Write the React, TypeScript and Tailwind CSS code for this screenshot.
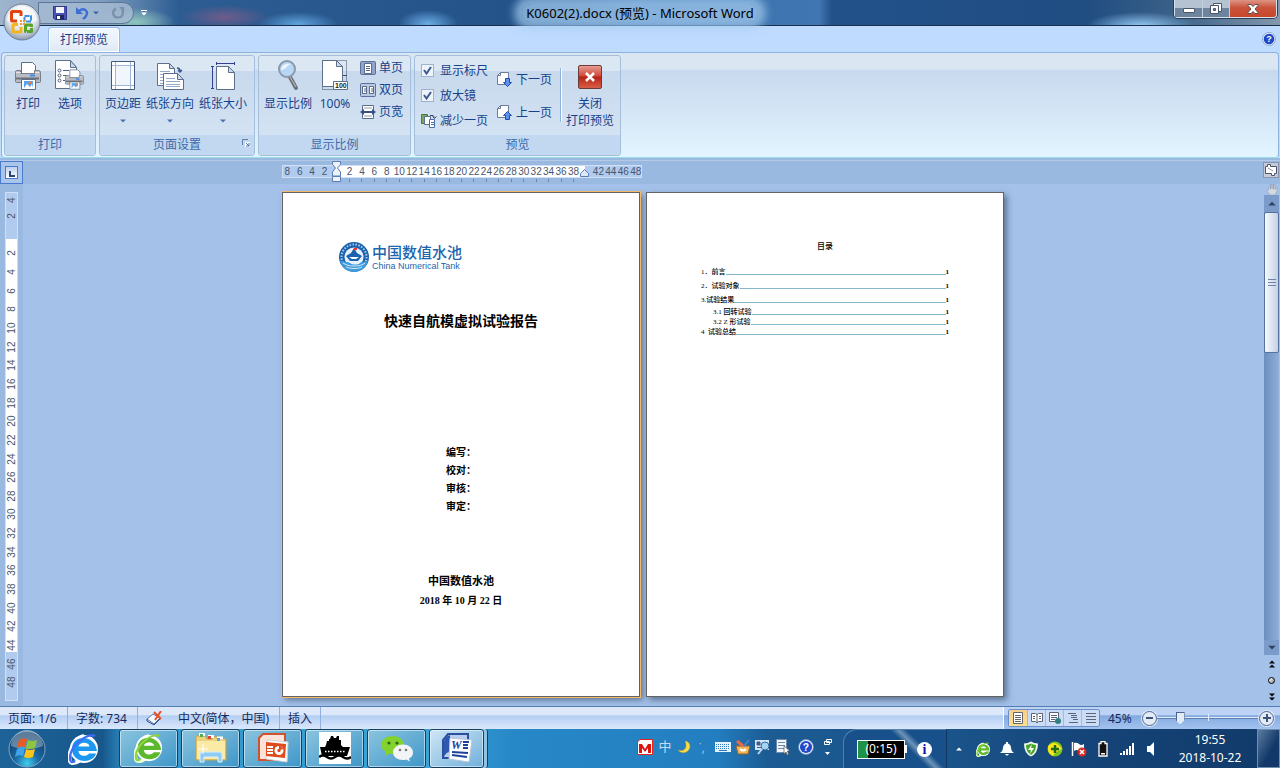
import type { ReactNode } from "react";

type IconProps = { className?: string };

const hNumbers = ["8", "6", "4", "2", "", ...Array.from({ length: 19 }, (_, i) => String(i * 2 + 2)), "", "42", "44", "46", "48"];
const vNumbers = ["4", "2", "", ...Array.from({ length: 24 }, (_, i) => String(i * 2 + 2))];

const toc = [
    { title: "1．前言", height: "h-[14px]", indent: "" },
    { title: "2．试验对象", height: "h-[14px]", indent: "" },
    { title: "3.试验结果", height: "h-[14px]", indent: "" },
    { title: "3.1 回转试验", height: "h-[10px]", indent: "pl-3" },
    { title: "3.2 Z 形试验", height: "h-[10px]", indent: "pl-3" },
    { title: "4  试验总结", height: "h-[11px]", indent: "" },
];

function OfficeLogo() {
    return (
        <svg viewBox="0 0 38 38" className="size-[38px]">
            <defs>
                <radialGradient id="orb" cx="50%" cy="35%" r="65%">
                    <stop offset="0" stopColor="#ffffff" />
                    <stop offset="0.6" stopColor="#dfe4ec" />
                    <stop offset="1" stopColor="#8d9bb0" />
                </radialGradient>
            </defs>
            <circle cx="19" cy="19" r="18" fill="url(#orb)" stroke="#6c7d96" />
            <path d="M4 18a15 15 0 0 1 30 0c-8 3-22 3-30 0z" fill="#fff" opacity="0.6" />
            <g fill="none" strokeLinejoin="round">
                <path d="M14 18H9.500q-1 0-1-1V9.500q0-1 1-1H17q1 0 1 1V13" stroke="#e2430f" strokeWidth="3" />
                <path d="M21.500 13h6.500v5.500h-6.500z" stroke="#3b8fdc" strokeWidth="2" strokeDasharray="5 1" />
                <path d="M15 21.500h-4q-1 0-1 1V28q0 1 1 1h6q1 0 1-1v-4" stroke="#f2b51c" strokeWidth="3" />
                <path d="M22.500 22h6v6.500h-6z" stroke="#58a428" strokeWidth="3" strokeDasharray="8 1" />
            </g>
            <path d="M17 17h2v2h-2zM20 17h2v2h-2zM17 20h2v2h-2zM20 20h2v2h-2z" fill="#f39a2e" />
        </svg>
    );
}

function SaveIcon() {
    return (
        <svg viewBox="0 0 14 14" className="size-[14px]">
            <path d="M.5.5h13v13H2L.5 12z" fill="#4a52b4" stroke="#30368c" />
            <path d="M3 1h8v6H3z" fill="#f1f4ff" />
            <path d="M3 9h8v4.500H3z" fill="#20265f" />
            <path d="M4 10h3v3H4z" fill="#fff" />
        </svg>
    );
}

function UndoIcon() {
    return (
        <svg viewBox="0 0 14 14" className="size-[14px]">
            <path d="M4 5c5-4 10 0 7 5-1 2-2 2-3 3" fill="none" stroke="#3c6fd6" strokeWidth="2.400" />
            <path d="M1 1v7h7z" fill="#3c6fd6" />
        </svg>
    );
}

function RedoIcon() {
    return (
        <svg viewBox="0 0 14 14" className="size-[14px]">
            <path d="M5 2.500c-5 3-3 9 2 9s6-5 4-8" fill="none" stroke="#7c8fa9" strokeWidth="2.200" />
            <path d="M8 1h5v5z" fill="#7c8fa9" />
        </svg>
    );
}

function Caret({ className = "" }: IconProps) {
    return (
        <svg viewBox="0 0 6 4" className={`h-1 w-1.5 ${className}`}>
            <path d="M0 .5h6L3 3.500z" fill="currentColor" />
        </svg>
    );
}

function PrinterShape() {
    return (
        <g>
            <path d="M8.500 2.500h11l3 3v8h-14z" fill="#fff" stroke="#5d6f8c" />
            <path d="M3.500 10.500h4v3h14v-3h4q2 0 2 2v9q0 1-1 1h-23q-1 0-1-1v-9q0-2 1-2z" fill="#b9bcc2" stroke="#7b7e85" />
            <path d="M3 12.500h5M22 12.500h4" stroke="#e2e4e8" />
            <path d="M3 18.500h23" stroke="#6d7077" strokeWidth="2" />
            <path d="M17 15.500h5" stroke="#418bf0" strokeWidth="2" />
            <path d="M8.500 19.500h14v10h-14z" fill="#fff" stroke="#5d6f8c" />
            <path d="M11 21h9v7h-9z" fill="#58a5ef" />
            <path d="m11 28 3-4 3 3 2-3 1 4z" fill="#fff" />
            <circle cx="17" cy="23" r="1.500" fill="#e8773e" />
        </g>
    );
}

function PrintIcon() {
    return (
        <svg viewBox="0 0 30 32" className="h-8 w-[30px]">
            <PrinterShape />
        </svg>
    );
}

function OptionsIcon() {
    return (
        <svg viewBox="0 0 32 32" className="size-8">
            <path d="M1.500.5h15l6 7v21h-21z" fill="#fff" stroke="#5d6f8c" />
            <path d="M16.500.5v7h6z" fill="#c9d8ea" stroke="#5d6f8c" />
            <g fill="#fff" stroke="#4d5f7d">
                <circle cx="5.500" cy="10.500" r="1.500" />
                <circle cx="5.500" cy="15.500" r="1.500" />
                <circle cx="5.500" cy="20.500" r="1.500" />
                <path d="M9 10.500h6M9 15.500h4M9 20.500h2" />
            </g>
            <svg x="9" y="8" width="23" height="23" viewBox="0 0 30 32">
                <PrinterShape />
            </svg>
        </svg>
    );
}

function MarginsIcon() {
    return (
        <svg viewBox="0 0 26 32" className="h-8 w-[26px]">
            <path d="M1.500 1.500h23v28h-23z" fill="#fff" stroke="#44597c" />
            <path d="M5.500 2v27M20.500 2v27M2 5.500h22M2 25.500h22" stroke="#9fb6d5" />
            <path d="M6 6h14v19H6z" fill="#f1f6fc" />
        </svg>
    );
}

function OrientationIcon() {
    return (
        <svg viewBox="0 0 30 32" className="h-8 w-[30px]">
            <path d="M2.500 3.500h12l5 5v17h-17z" fill="#fff" stroke="#5d6f8c" />
            <path d="M14.500 3.500v5h5z" fill="#c9d8ea" stroke="#5d6f8c" />
            <path d="M5 11.500h10M5 14.500h5M5 17.500h4M5 20.500h4M5 23.500h4" stroke="#93abc9" />
            <path d="M8.500 13.500h14l6 6v10h-20z" fill="#fff" stroke="#5d6f8c" />
            <path d="M22.500 13.500v6h6z" fill="#c9d8ea" stroke="#5d6f8c" />
            <path d="M11 18.500h9M11 21.500h14M11 24.500h14M11 26.500h14" stroke="#93abc9" />
            <path d="M22 8q3 0 3 3m-2-1 2 2 2-2" fill="none" stroke="#3b5794" strokeWidth="1.500" />
        </svg>
    );
}

function SizeIcon() {
    return (
        <svg viewBox="0 0 28 32" className="h-8 w-7">
            <path d="M7.500 6.500h12l6 6v17h-18z" fill="#fff" stroke="#5d6f8c" />
            <path d="M19.500 6.500v6h6z" fill="#c9d8ea" stroke="#5d6f8c" />
            <path d="M7 3.500h18M7.500 2v3M25.500 2v3M3.500 7v22M2 6.500h3M2 28.500h3" stroke="#353f92" />
        </svg>
    );
}

function MagnifierIcon() {
    return (
        <svg viewBox="0 0 28 32" className="h-8 w-7">
            <path d="m16 17 6 11" stroke="#6d7179" strokeWidth="4" strokeLinecap="round" />
            <path d="m16 17 6 10" stroke="#c2c5ca" strokeWidth="1" />
            <circle cx="13" cy="9" r="8" fill="#b8d6f6" stroke="#8c98ab" strokeWidth="2" />
            <path d="M7 10c0-4 4-7 10-6-4 1-4 5-10 6z" fill="#edf6ff" />
        </svg>
    );
}

function HundredIcon() {
    return (
        <svg viewBox="0 0 26 32" className="h-8 w-[26px]">
            <path d="M.5.5h24v29H.5z" fill="none" stroke="#3d4b66" strokeDasharray="1 1" />
            <path d="M.5.5h14l6 6v20H.5z" fill="#fff" stroke="#5d6f8c" />
            <path d="M14.500.5v6h6z" fill="#c9d8ea" stroke="#5d6f8c" />
            <path d="M21 15.500h4" stroke="#3d4b66" />
            <path d="M11.500 21.500h14v8h-14z" fill="#fff" stroke="#5d6f8c" />
            <text x="13" y="28" fontSize="7" fontWeight="bold" fontFamily="Liberation Sans" fill="#222">100</text>
        </svg>
    );
}

function SmallPageIcon({ kind }: { kind: "one" | "two" | "width" }) {
    return (
        <svg viewBox="0 0 16 16" className="size-4">
            {kind !== "width" && <rect x=".5" y="1.500" width="15" height="13" rx="1" fill="#8fa4c8" stroke="#5c7199" />}
            {kind === "one" && <path d="M4.500 3.500h7v10h-7zM6 6.500h4M6 8.500h4M6 10.500h4" fill="#fff" stroke="#5a6c8a" />}
            {kind === "two" && (
                <g>
                    <path d="M1 2h14v12H1z" fill="#b9c9e2" />
                    <path d="M2.500 4.500h4v7h-4zM9.500 4.500h4v7h-4zM4 7h2M4 9h2M11 7h2M11 9h2" fill="#fff" stroke="#5a6c8a" />
                </g>
            )}
            {kind === "width" && (
                <g>
                    <path d="M2.500 1.500h11v13h-11z" fill="#fff" stroke="#5a6c8a" />
                    <path d="M4 4h8M4 12h8" stroke="#8b9cb8" />
                    <path d="M0 8l4-3v2h8V5l4 3-4 3V9H4v2z" fill="#3b4e86" />
                </g>
            )}
        </svg>
    );
}

function ShrinkIcon() {
    return (
        <svg viewBox="0 0 16 16" className="size-4">
            <path d="M.5 1.500h6v9h-6z" fill="#74a865" stroke="#4b7a40" />
            <path d="M3.500 3.500h6v8h-6z" fill="#fff" stroke="#5d6f8c" />
            <path d="M8.500 6.500h5v8h-5zM10 9.500h3M10 11.500h3" fill="#fff" stroke="#4c6ea9" />
            <path d="M9 2.500q4-1 4.500 2m-2-1 2 2 2-2" fill="none" stroke="#33496f" />
        </svg>
    );
}

function TurnPageIcon({ up }: { up: boolean }) {
    return (
        <svg viewBox="0 0 16 16" className="size-4">
            <path d="M3.500.5h8v12h-11v-9z" fill="#fff" stroke="#6b7d99" />
            <path d="M3.500.5v3h-3" fill="none" stroke="#6b7d99" />
            {up ? (
                <path d="M10.500 6.500l4 4h-2v4h-4v-4h-2z" fill="#5d91ee" stroke="#234bb1" />
            ) : (
                <path d="M10.500 14.500l-4-4h2v-4h4v4h2z" fill="#5d91ee" stroke="#234bb1" />
            )}
        </svg>
    );
}

function CloseIcon() {
    return (
        <svg viewBox="0 0 26 26" className="size-[26px]">
            <defs>
                <linearGradient id="closeRed" x1="0" y1="0" x2="0" y2="1">
                    <stop offset="0" stopColor="#e8a198" />
                    <stop offset="0.45" stopColor="#cf4a3b" />
                    <stop offset="0.5" stopColor="#b82214" />
                    <stop offset="1" stopColor="#d9604a" />
                </linearGradient>
            </defs>
            <rect x="1.500" y="1.500" width="23" height="23" rx="1.500" fill="url(#closeRed)" stroke="#6d3b38" />
            <path d="m9 9 8 8M17 9l-8 8" stroke="#fff" strokeWidth="2.500" />
        </svg>
    );
}

function HelpIcon({ className = "" }: IconProps) {
    return (
        <svg viewBox="0 0 14 14" className={className}>
            <circle cx="7" cy="7" r="6.500" fill="#f2f6fc" stroke="#6d8fc4" strokeWidth="0.700" />
            <circle cx="7" cy="7" r="5.300" fill="#1f49c8" />
            <text x="7" y="10.300" textAnchor="middle" fontSize="9" fontWeight="bold" fontFamily="Liberation Sans" fill="#fff">?</text>
        </svg>
    );
}

function TankLogo() {
    return (
        <svg viewBox="0 0 32 32" className="size-8">
            <circle cx="16" cy="16" r="15" fill="#1d62ae" />
            <circle cx="16" cy="16" r="12.500" fill="none" stroke="#a9cbea" strokeWidth="2" strokeDasharray="1.500 1.500" />
            <circle cx="16" cy="16" r="9.500" fill="#e9f3fb" />
            <path d="M16 7l3 5 5 3-4 5h-8l-4-5 5-3z" fill="#1d62ae" />
            <path d="M11 16h10l-3 2h-4z" fill="#fff" />
            <path d="M2 19c4 3 7 1 10 3s8 2 10 0 5 0 8-3c-1 7-7 12-14 12S3 26 2 19z" fill="#3f9bdc" />
            <path d="M5 22c5 3 8 3 11 3s7 0 11-3M8 26c4 2 12 2 16 0" fill="none" stroke="#d8ebf8" />
            <path d="M16 7h3v2h-3z" fill="#e33" />
        </svg>
    );
}

function StartOrb() {
    return (
        <svg viewBox="0 0 40 40" className="size-10">
            <defs>
                <radialGradient id="start" cx="50%" cy="90%" r="80%">
                    <stop offset="0" stopColor="#3fd0ee" />
                    <stop offset="0.4" stopColor="#1b6ca6" />
                    <stop offset="1" stopColor="#123a66" />
                </radialGradient>
            </defs>
            <circle cx="20" cy="20" r="18" fill="url(#start)" stroke="#82a5c0" />
            <path d="M4 17a16 16 0 0 1 32 0c-9 4-23 4-32 0z" fill="#cfe0ec" opacity="0.4" />
            <path d="M12 11q4-3 8-1l-2 8q-4-2-8 1z" fill="#ea5a24" />
            <path d="M21 11q4 2 9 0l-2 8q-5 2-9 0z" fill="#8cc63e" />
            <path d="M10 20q4-3 8-1l-2 8q-4-2-8 1z" fill="#3fa5e8" />
            <path d="M19 20q4 2 9 0l-2 8q-5 2-9 0z" fill="#fbc31c" />
        </svg>
    );
}

function BrowserIcon({ green, className = "" }: { green?: boolean; className?: string }) {
    const main = green ? "#5cb82c" : "#1c98f0";
    return (
        <svg viewBox="0 0 32 32" className={className}>
            <path d="M16 3C3 5-3 31 5 30c4 0 7-3 7-3" fill="none" stroke={green ? "#e8ffd8" : "#f5fbff"} strokeWidth="4" />
            <circle cx="16" cy="16" r="14" fill="#fff" />
            <path d="M29 18H10.500c.5 6 8.500 6 10.500 2.500h7C25.500 31 4 31 4 16S27 1 29 18zM10.500 13.500h11c-.5-5-10-5-11 0z" fill={main} />
            <path d="M27 3C20-1 1 13 2 26c0 3 2 4 5 2" fill="none" stroke={green ? "#8ed43e" : "#3f6df4"} strokeWidth="2.200" />
        </svg>
    );
}

function ExplorerIcon() {
    return (
        <svg viewBox="0 0 34 32" className="h-8 w-[34px]">
            <path d="M2 4h9l2 3h5l2-2h5l1 2h6v21H2z" fill="#ecd27a" stroke="#c9a444" />
            <path d="M5 2.500h6M14 4.500h6M23 6h6" stroke="#fff" strokeWidth="3" />
            <path d="M6 2h3v3H6z" fill="#4bb050" />
            <path d="M14 4h3v3h-3z" fill="#db4837" />
            <path d="M23 6h3v3h-3z" fill="#5aa0e2" />
            <path d="M3 9h28v18H3z" fill="#f9eaa5" />
            <path d="M6 30V22q0-2 2-2h18q2 0 2 2v8h-4v-5H10v5z" fill="#8fcbf2" stroke="#d9f1ff" />
            <path d="M9 12v10M4 17h10" stroke="#fff" />
        </svg>
    );
}

function SlidesIcon() {
    return (
        <svg viewBox="0 0 32 32" className="size-8">
            <path d="M6 2h22v26H2V6z" fill="#fbe3da" stroke="#cf5330" strokeWidth="2" />
            <path d="m10 8 21 2-1 20-21-3z" fill="#fff" stroke="#d3d3d3" />
            <path d="m9 10 20 2-1 14-19-2z" fill="#e04a1c" />
            <path d="M10 14h6v2h-6zM10 17h6v2h-6zM10 20h6v2h-6z" fill="#fff" />
            <circle cx="22" cy="18.500" r="4.500" fill="#fff" />
            <circle cx="22" cy="18.500" r="1.700" fill="#e04a1c" />
            <path d="M22 18V13l5 4z" fill="#e04a1c" />
        </svg>
    );
}

function ShipIcon() {
    return (
        <svg viewBox="0 0 32 32" className="size-8">
            <path d="M0 0h32v32H0z" fill="#fff" />
            <path d="M7 13l1-4h2V7h1l1-3h2l1 2h2l1-2h2v4h2v5l2 2h7l-3 9H3L1 15h5z" fill="#000" />
            <path d="M6 19.500h20" stroke="#fff" strokeWidth="1.500" strokeDasharray="1.500 1.500" />
            <path d="M0 25q4-3 8 0t8 0 8 0 8 0" fill="none" stroke="#000" strokeWidth="2.500" />
        </svg>
    );
}

function WeChatIcon() {
    return (
        <svg viewBox="0 0 34 32" className="h-8 w-[34px]">
            <path d="M12.500 4C19 4 24 8 24 13s-5 9-11.500 9q-2 0-3-.5L5 24l1-4q-5-3-5-7c0-5 5-9 11.500-9z" fill="#83d32e" />
            <circle cx="9" cy="11" r="1.600" fill="#31650f" />
            <circle cx="17" cy="11" r="1.600" fill="#31650f" />
            <path d="M23 12.500c5.500 0 10 3.500 10 8q0 4-4 6l1 3-4-2q-1 .5-3 .5c-5.500 0-10-3-10-7.500s4.500-8 10-8z" fill="#f3f4f5" />
            <circle cx="20" cy="18" r="1.300" fill="#777" />
            <circle cx="26" cy="18" r="1.300" fill="#777" />
        </svg>
    );
}

function WordIcon() {
    return (
        <svg viewBox="0 0 32 32" className="size-8">
            <path d="M7 2h20v24H2V8z" fill="#b8cdef" stroke="#2b509e" strokeWidth="2" />
            <path d="M3 9q2-5 6-6v17q-4 0-6 5z" fill="#2d58ad" />
            <path d="m9 6 22 2-3 22-20-3z" fill="#fff" stroke="#b9c7de" />
            <text x="10" y="17" fontSize="12" fontWeight="bold" fontStyle="italic" fontFamily="Liberation Serif" fill="#1d429a">W</text>
            <path d="M22 10h6M22 13h5M22 16h5M11 20l16 1M11 23l15 2" stroke="#1d429a" strokeWidth="1.800" />
        </svg>
    );
}

function RibbonGroup({ title, className = "", launcher, children }: { title: string; className?: string; launcher?: boolean; children: ReactNode }) {
    return (
        <section className={`flex flex-col rounded-[3px] border border-[#a3bfdc] bg-linear-to-b from-[#dce7f4] from-15% via-[#c8d9ed] via-15% to-[#d7e6f5] ${className}`}>
            <div className="flex h-[79px]">{children}</div>
            <div className="relative h-5 rounded-b-[2px] bg-[#c1d8f0] text-center leading-5 text-[#3e6aaa]">
                {title}
                {launcher && (
                    <button aria-label="页面设置" className="absolute top-1 right-1">
                        <svg viewBox="0 0 8 8" className="size-2">
                            <path d="M.5 6V.5H6" fill="none" stroke="#5c7fae" />
                            <path d="M3 3h5v5H3z" fill="#fff" />
                            <path d="M4 4l3 3M7 4v3H4" fill="none" stroke="#4a6e9f" />
                        </svg>
                    </button>
                )}
            </div>
        </section>
    );
}

function BigButton({ icon, label, className = "", menu }: { icon: ReactNode; label: string; className?: string; menu?: boolean }) {
    return (
        <button className={`flex flex-col items-center pt-1 whitespace-nowrap ${className}`}>
            {icon}
            <span className="mt-[3px] leading-[18px]">{label}</span>
            {menu && <Caret className="mt-1.5 text-[#4a74b0]" />}
        </button>
    );
}

function SmallButton({ icon, label, className = "" }: { icon: ReactNode; label: string; className?: string }) {
    return (
        <button className={`flex items-center gap-[3px] whitespace-nowrap ${className}`}>
            {icon}
            <span>{label}</span>
        </button>
    );
}

function TitleBar() {
    return (
        <header className="relative flex h-[26px] items-start border-b border-[#1b2f4b] bg-[radial-gradient(ellipse_40px_14px_at_135px_22px,#8fc6bd,transparent),radial-gradient(ellipse_45px_12px_at_225px_17px,#705c8a,transparent),radial-gradient(ellipse_40px_12px_at_298px_24px,#5fa3dd,transparent),radial-gradient(ellipse_30px_14px_at_428px_24px,#6bade6,transparent),radial-gradient(ellipse_55px_14px_at_1141px_26px,#93cbf6,transparent),linear-gradient(90deg,#9fb4cd,#7f9dbf_8%,#2c5c92_14%,#245389_40%,#3a70ae_50%,#4076b1_64%,#22518a_65%,#204d82_85%,#3c6188_92%,#8398ae)]">
            <div className="mt-[2px] ml-[38px] flex h-[22px] w-24 items-center rounded-r-full border border-[#5d7696] bg-[#a6bbd3]/80 pl-[14px]">
                <button aria-label="保存"><SaveIcon /></button>
                <button aria-label="撤消" className="ml-2"><UndoIcon /></button>
                <button aria-label="撤消列表" className="ml-1 text-[#3c65a5]"><Caret /></button>
                <button aria-label="恢复" className="ml-3"><RedoIcon /></button>
            </div>
            <button aria-label="自定义快速访问工具栏" className="mt-[10px] ml-[7px] flex flex-col items-center text-white">
                <span className="mb-px h-px w-1.5 bg-white" />
                <Caret />
            </button>
            <h1 className="pointer-events-none absolute inset-x-0 top-1 text-center text-[13px] leading-[18px] text-black">
                <span className="rounded-full bg-[#a5cdf0]/70 px-1 shadow-[0_0_8px_8px_rgba(165,205,240,0.7)]">K0602(2).docx (预览) - Microsoft Word</span>
            </h1>
            <div className="mr-[3px] ml-auto flex h-[18px] rounded-b-[4px] border border-t-0 border-[#d7e1ec] shadow-[0_0_0_1px_#2c3f58]">
                <button aria-label="最小化" className="flex w-7 items-center justify-center border-r border-[#c4d0dd] bg-linear-to-b from-[#b4c2d1] from-50% to-[#6d849f] to-50%">
                    <span className="mt-1 h-[5px] w-3 rounded-[1px] border border-[#4a5666] bg-white" />
                </button>
                <button aria-label="还原" className="flex w-[27px] items-center justify-center border-r border-[#c4d0dd] bg-linear-to-b from-[#b4c2d1] from-50% to-[#6d849f] to-50%">
                    <svg viewBox="0 0 12 12" className="size-3">
                        <path d="M3.500.5h8v8h-8z" fill="#fff" stroke="#4a5666" />
                        <path d="M.5 2.500h8v8h-8z" fill="#fff" stroke="#4a5666" />
                        <path d="M3.500 5.500h2v2h-2z" fill="#6f87a4" stroke="#4a5666" />
                    </svg>
                </button>
                <button aria-label="关闭" className="flex w-[46px] items-center justify-center rounded-br-[3px] bg-linear-to-b from-[#dc9384] via-[#c9533b] via-45% to-[#c8472a]">
                    <svg viewBox="0 0 12 10" className="h-2.5 w-3">
                        <path d="M1 .5h3l2 2 2-2h3v1L8 5l3 3.500v1H8l-2-2-2 2H1v-1L4 5 1 1.500z" fill="#fff" stroke="#5d4a4e" />
                    </svg>
                </button>
            </div>
            <button aria-label="Office 按钮" className="absolute top-[3px] left-[3px] z-10">
                <OfficeLogo />
            </button>
        </header>
    );
}

function Ribbon() {
    return (
        <div className="bg-[#bfdbff] text-[12px] text-[#15428b]">
            <nav className="flex h-[26px] items-end justify-between pr-1 pl-12">
                <button className="h-[25px] w-[72px] rounded-t-[4px] border border-b-0 border-[#93b8e6] bg-linear-to-b from-[#f3f8fe] to-[#dfe9f5] leading-[22px] shadow-[inset_0_0_0_1px_#fff]">打印预览</button>
                <button aria-label="帮助" className="mb-1.5"><HelpIcon className="size-[14px]" /></button>
            </nav>
            <div className="mx-px flex gap-[3px] rounded-[4px] border border-[#8db2e3] border-b-[#9bdbe8] bg-linear-to-b from-[#dbe6f3] from-15% via-[#c8d9ee] via-17% to-[#e2f5ff] px-0.5 pt-0.5 pb-px">
                <RibbonGroup title="打印" className="w-[92px]">
                    <BigButton icon={<PrintIcon />} label="打印" className="ml-0.5 w-[42px]" />
                    <BigButton icon={<OptionsIcon />} label="选项" className="w-[42px]" />
                </RibbonGroup>
                <RibbonGroup title="页面设置" className="w-[156px]" launcher>
                    <BigButton icon={<MarginsIcon />} label="页边距" className="ml-px w-11" menu />
                    <BigButton icon={<OrientationIcon />} label="纸张方向" className="w-[50px]" menu />
                    <BigButton icon={<SizeIcon />} label="纸张大小" className="w-14" menu />
                </RibbonGroup>
                <RibbonGroup title="显示比例" className="w-[153px]">
                    <BigButton icon={<MagnifierIcon />} label="显示比例" className="ml-[3px] w-[52px]" />
                    <BigButton icon={<HundredIcon />} label="100%" className="w-[42px]" />
                    <div className="ml-1 flex flex-col pt-px">
                        <SmallButton icon={<SmallPageIcon kind="one" />} label="单页" className="h-[22px]" />
                        <SmallButton icon={<SmallPageIcon kind="two" />} label="双页" className="h-[22px]" />
                        <SmallButton icon={<SmallPageIcon kind="width" />} label="页宽" className="h-[22px]" />
                    </div>
                </RibbonGroup>
                <RibbonGroup title="预览" className="w-[207px]">
                    <div className="ml-1.5 flex w-19 flex-col pt-0.5">
                        {["显示标尺", "放大镜"].map((label) => (
                            <label key={label} className="flex h-[25px] items-center gap-1.5 whitespace-nowrap">
                                <input
                                    type="checkbox"
                                    defaultChecked
                                    className="peer size-[13px] appearance-none border border-[#9fb2cf] bg-[#eef3fa] bg-center bg-no-repeat checked:bg-[url('data:image/svg+xml,%3Csvg%20xmlns=%22http://www.w3.org/2000/svg%22%20width=%229%22%20height=%229%22%3E%3Cpath%20d=%22M1%204l2.500%203.500L8%201%22%20fill=%22none%22%20stroke=%22%233b5a92%22%20stroke-width=%222%22/%3E%3C/svg%3E')]"
                                />
                                {label}
                            </label>
                        ))}
                        <SmallButton icon={<ShrinkIcon />} label="减少一页" className="h-[25px]" />
                    </div>
                    <div className="flex w-[63px] flex-col pt-[7px]">
                        <SmallButton icon={<TurnPageIcon up={false} />} label="下一页" className="h-[33px]" />
                        <SmallButton icon={<TurnPageIcon up />} label="上一页" className="h-[33px]" />
                    </div>
                    <div className="mt-3 h-[54px] w-0.5 border-r border-l border-r-white border-l-[#8fb2da]" />
                    <button className="flex w-14 flex-col items-center pt-2 leading-[17px] whitespace-nowrap">
                        <CloseIcon />
                        <span className="mt-[5px]">关闭</span>
                        <span>打印预览</span>
                    </button>
                </RibbonGroup>
            </div>
            <div className="h-[3px] border-b border-[#b4cae6] bg-[#9ab9e0]" />
        </div>
    );
}

function HorizontalRuler() {
    return (
        <div className="flex h-[23px] items-start justify-between bg-[#9ab9e0]">
            <button aria-label="制表符" className="flex size-[23px] items-center justify-center border border-[#4a7ad0] bg-[#a9c5ea]">
                <span className="flex size-[13px] items-end justify-center border border-[#4a7ad0] bg-linear-to-b from-[#bcd0ec] to-white">
                    <svg viewBox="0 0 6 6" className="mb-px size-1.5">
                        <path d="M1 0v5h5" fill="none" stroke="#2c4470" strokeWidth="2" />
                    </svg>
                </span>
            </button>
            <div className="relative mt-1 w-[722px]">
                <div className="flex h-[13px] w-[360px] border border-[#cfe0f6] bg-[#b1cbee]">
                    <div className="ml-[54px] w-[248px] bg-white" />
                </div>
                <div className="absolute top-0 -left-px grid w-[361px] grid-cols-29 text-center font-['Liberation_Sans'] text-[10px] leading-[13px] text-[#4a566c]">
                    {hNumbers.map((n, i) => (
                        <span key={i} className="flex flex-col items-center">
                            <span className="h-[13px]">{n}</span>
                            {i > 4 && i < 24 && <span className="mt-px h-[3px] w-px bg-[#6d86a8]" />}
                        </span>
                    ))}
                </div>
                <svg viewBox="0 0 10 21" className="absolute -top-1 left-[50px] h-[21px] w-2.5">
                    <path d="M.5.5h8v3L5.500 7 8.500 11v4h-8v-4L3.500 7l-3-3.500zM.5 15.500h8v5h-8z" fill="#eef3fb" stroke="#5b7db4" />
                </svg>
                <svg viewBox="0 0 10 8" className="absolute top-1 left-[298px] h-2 w-2.5">
                    <path d="M.5 7.500v-3l4-4 4 4v3z" fill="#dce8f8" stroke="#5b7db4" />
                </svg>
            </div>
            <button aria-label="标尺" className="mt-px mr-px flex size-4 items-center justify-center border border-[#8793ae] bg-[#c6cbd9]">
                <svg viewBox="0 0 12 12" className="size-3">
                    <path d="M.5 2.500h2v-2h3v2h6v7h-2v2h-3v-2h-6z" fill="#fff" stroke="#4c5568" />
                    <path d="M3 4l5 3" stroke="#8b93a5" />
                </svg>
            </button>
        </div>
    );
}

function VerticalRuler() {
    return (
        <div className="w-[23px] shrink-0 bg-[#9ab9e0] pt-2 pb-[5px] pl-[5px]">
            <div className="grid h-[509px] w-[13px] grid-rows-[14px_repeat(26,1fr)] border border-[#cfe0f6] bg-[linear-gradient(#b1cbee_46px,white_46px,white_459px,#b1cbee_459px)] pb-2 font-['Liberation_Sans'] text-[10px] leading-[11px] text-[#4a566c]">
                {vNumbers.map((n, i) => (
                    <span key={i} className="flex rotate-180 items-center justify-center [writing-mode:vertical-rl]">{n}</span>
                ))}
            </div>
        </div>
    );
}

function CoverPage() {
    return (
        <article className="flex h-[505px] w-[358px] flex-col items-center border border-[#626262] bg-white font-['Liberation_Serif','Noto_Sans_CJK_SC',serif] font-bold text-black shadow-[3px_3px_6px_#5e7391] outline outline-[#f3b868]">
            <div className="mt-12 ml-[55px] flex items-center gap-0.5 self-start text-[#1c65ae]">
                <TankLogo />
                <div className="font-['Liberation_Sans','Noto_Sans_CJK_SC',sans-serif] font-medium">
                    <p className="text-[15px] leading-[18px]">中国数值水池</p>
                    <p className="text-[9px] leading-[9px]">China Numerical Tank</p>
                </div>
            </div>
            <h2 className="mt-[39px] text-[14px] leading-5">快速自航模虚拟试验报告</h2>
            <div className="mt-28 text-[10px] leading-[18px]">
                <p>编写：</p>
                <p>校对：</p>
                <p>审核：</p>
                <p>审定：</p>
            </div>
            <p className="mt-[55px] text-[11px] leading-5">中国数值水池</p>
            <p className="text-[10px] leading-5">2018 年 10 月 22 日</p>
        </article>
    );
}

function ContentsPage() {
    return (
        <article className="flex h-[505px] w-[358px] flex-col border border-[#626262] bg-white px-[54px] font-['Liberation_Serif','Noto_Sans_CJK_SC',serif] text-[7px] text-black shadow-[3px_3px_6px_#5e7391]">
            <h2 className="mt-12 text-center text-[8px] leading-3 font-medium">目录</h2>
            <nav className="mt-3 flex flex-col font-medium">
                {toc.map((line) => (
                    <a key={line.title} href="#" className={`flex items-center whitespace-pre ${line.height} ${line.indent}`}>
                        {line.title}
                        <span className="mt-1 flex-1 border-b border-[#86b7cb]" />
                        <span className="font-bold">1</span>
                    </a>
                ))}
            </nav>
        </article>
    );
}

function ScrollBar() {
    return (
        <div className="flex w-[17px] shrink-0 flex-col items-center">
            <button aria-label="平移" className="flex h-[11px]">
                <svg viewBox="0 0 12 11" className="h-[11px] w-3">
                    <path d="M3 6V2h1.500v3V.5H6V5 0h1.500v5V1H9v5l1.500-2L12 5 9 11H4L1 7l1-1.500z" fill="#d3d9e3" stroke="#8793a8" strokeWidth="0.500" />
                </svg>
            </button>
            <div className="flex w-[15px] flex-1 flex-col bg-linear-to-r from-[#6c8fbf] to-[#8fafd8]">
                <button aria-label="向上滚动" className="flex h-[17px] items-center justify-center bg-[#7b9cca] text-[#2d4266]">
                    <Caret className="h-[5px] w-2 rotate-180" />
                </button>
                <button aria-label="滚动条" className="flex h-[141px] flex-col items-center justify-center gap-0.5 rounded-[2px] border border-[#56719c] bg-linear-to-r from-[#f7f9fc] to-[#c3d1e6]">
                    <span className="h-px w-2 bg-[#6f85a8]" />
                    <span className="h-px w-2 bg-[#6f85a8]" />
                    <span className="h-px w-2 bg-[#6f85a8]" />
                </button>
                <button aria-label="向下滚动" className="mt-auto flex h-[15px] items-center justify-center bg-[#7b9cca] text-[#2d4266]">
                    <Caret className="h-[5px] w-2" />
                </button>
            </div>
            <div className="flex h-[51px] flex-col items-center justify-around text-black">
                <button aria-label="前一页" className="flex flex-col">
                    <Caret className="rotate-180" />
                    <Caret className="rotate-180" />
                </button>
                <button aria-label="选择浏览对象" className="size-[7px] rounded-full border border-black bg-linear-to-br from-white to-[#8c8c8c]" />
                <button aria-label="下一页" className="flex flex-col">
                    <Caret />
                    <Caret />
                </button>
            </div>
        </div>
    );
}

function StatusBar() {
    return (
        <footer className="flex h-[23px] items-stretch border-t border-[#567db1] bg-linear-to-b from-[#dde9fb] from-35% via-[#b3cef3] via-40% to-[#dbe8fb] text-[12px] leading-[21px] text-[#15295e]">
            <button className="w-[68px] border-r border-[#93b0dc] pl-2 text-left whitespace-nowrap">页面: 1/6</button>
            <button className="w-[70px] border-r border-[#93b0dc] pl-2 text-left whitespace-nowrap">字数: 734</button>
            <button aria-label="校对错误" className="flex items-center pr-[15px] pl-2">
                <svg viewBox="0 0 17 14" className="h-[14px] w-[17px]">
                    <path d="M1 8l6-5 7 4-6 6z" fill="#f3f7fe" stroke="#5a74a8" />
                    <path d="M1 8v2l7 4 6-6" fill="none" stroke="#2f4c8c" />
                    <path d="m8 1 7 7M15 0 9 9" stroke="#e5502b" strokeWidth="2" />
                </svg>
            </button>
            <button className="w-[102px] border-r border-[#93b0dc] text-left whitespace-nowrap">中文(简体，中国)</button>
            <button className="w-[41px] border-r border-[#93b0dc] pl-2 text-left">插入</button>
            <div className="ml-auto flex items-center border-l border-white bg-linear-to-b from-[#bcd3f5] from-35% via-[#83aae0] via-40% to-[#a3c3ef] pr-1.5 pl-1">
                <div className="flex h-[18px] rounded-[2px] border border-[#6a8fc8] bg-[#cbddf6]">
                    <button aria-label="页面视图" className="flex w-[18px] items-center justify-center bg-linear-to-b from-[#f6cf8d] to-[#fbe08f]">
                        <svg viewBox="0 0 12 12" className="size-3"><path d="M1.500.5h9v11h-9zM3 3.500h6M3 5.500h6M3 7.500h6M3 9.500h6" fill="#fff" stroke="#66666a" /></svg>
                    </button>
                    <button aria-label="阅读版式" className="flex w-[18px] items-center justify-center border-l border-[#9dbbe6]">
                        <svg viewBox="0 0 12 12" className="size-3"><path d="M.5 1.500h4l1.500 1 1.500-1h4v8h-4L6 11l-1.500-1.500h-4zM6 2v8M2 4.500h2M2 6.500h2M8 4.500h2M8 6.500h2" fill="#fff" stroke="#5c6577" /></svg>
                    </button>
                    <button aria-label="Web 版式" className="flex w-[18px] items-center justify-center border-l border-[#9dbbe6]">
                        <svg viewBox="0 0 12 12" className="size-3"><path d="M.5.500h9v9h-9zM2 3.500h6M2 5.500h6M2 7.500h4" fill="#fff" stroke="#5c6577" /><circle cx="9" cy="9" r="3" fill="#2f7f83" /></svg>
                    </button>
                    <button aria-label="大纲视图" className="flex w-[18px] items-center justify-center border-l border-[#9dbbe6]">
                        <svg viewBox="0 0 12 12" className="size-3"><path d="M1 1.500h8M4 3.500h6M4 5.500h6M6 7.500h5M2 10.500h9" stroke="#5c6577" /></svg>
                    </button>
                    <button aria-label="普通视图" className="flex w-[18px] items-center justify-center border-l border-[#9dbbe6]">
                        <svg viewBox="0 0 12 12" className="size-3"><path d="M1 1.500h10M1 4.500h10M1 7.500h10M1 10.500h10" stroke="#5c6577" /></svg>
                    </button>
                </div>
                <button className="ml-2 w-[34px] text-left">45%</button>
                <button aria-label="缩小" className="flex size-[15px] items-center justify-center rounded-full border border-[#4c648f] bg-[#e3ebf7] shadow-[0_0_0_1px_#dfe9f8]">
                    <span className="h-0.5 w-[7px] bg-[#3d5378]" />
                </button>
                <input
                    type="range"
                    aria-label="显示比例"
                    min={0}
                    max={100}
                    defaultValue={20}
                    className="h-4 w-[102px] appearance-none bg-[linear-gradient(#e6effb,#e6effb),linear-gradient(transparent_7px,#dfe9f8_7px,#dfe9f8_8px,#5e7fb4_8px,#5e7fb4_9px,transparent_9px)] bg-[size:1px_7px,auto] bg-[position:51px_4px,0_0] bg-no-repeat [&::-webkit-slider-thumb]:h-[13px] [&::-webkit-slider-thumb]:w-[9px] [&::-webkit-slider-thumb]:appearance-none [&::-webkit-slider-thumb]:border [&::-webkit-slider-thumb]:border-[#4c648f] [&::-webkit-slider-thumb]:bg-[#e3ebf7] [&::-webkit-slider-thumb]:[clip-path:polygon(0_0,100%_0,100%_65%,50%_100%,0_65%)]"
                />
                <button aria-label="放大" className="flex size-[15px] items-center justify-center rounded-full border border-[#4c648f] bg-[#e3ebf7] shadow-[0_0_0_1px_#dfe9f8]">
                    <svg viewBox="0 0 8 8" className="size-2"><path d="M0 4h8M4 0v8" stroke="#3d5378" strokeWidth="2" /></svg>
                </button>
            </div>
        </footer>
    );
}

function TaskButton({ label, active, children }: { label: string; active?: boolean; children: ReactNode }) {
    return (
        <button
            aria-label={label}
            className={`flex h-[39px] items-center justify-center rounded-[3px] border border-[#163e60] pb-0.5 shadow-[inset_0_0_0_1px_rgba(255,255,255,0.5)] ${
                active ? "w-[55px] bg-linear-to-br from-[#cfe6f5] to-[#6fb0da]" : "w-[59px] bg-linear-to-br from-[#8ac4de] to-[#3c97c9]"
            }`}
        >
            {children}
        </button>
    );
}

function LanguageBar() {
    return (
        <div className="flex h-4 items-center">
            <svg viewBox="0 0 16 16" className="size-4">
                <path d="M3 .5h12.500v15H.5V3z" fill="#fff" stroke="#e0261d" />
                <path d="M2 14V5h3l3 5 3-5h3v9h-3V9l-3 4-3-4v5z" fill="#d9150e" />
            </svg>
            <span className="ml-1 w-4 text-center text-[13px] text-[#c4dcf4]">中</span>
            <svg viewBox="0 0 14 14" className="ml-1 size-[14px]">
                <path d="M8 1c3 7-1 11-7 9 3 5 12 3 12-4 0-3-3-5-5-5z" fill="#f8dc4c" stroke="#b68f1c" strokeWidth="0.500" />
            </svg>
            <span className="ml-2 w-3 text-[13px] leading-4 text-[#8fc0ee]">˙,</span>
            <svg viewBox="0 0 16 12" className="ml-1 h-3 w-4">
                <path d="M0 1h16v10H0z" fill="#e5f3ff" />
                <path d="M1 3.500h14M1 5.500h14M1 7.500h14" stroke="#2f78c0" strokeDasharray="1 1" />
                <path d="M4 9.500h8" stroke="#2f78c0" />
            </svg>
            <svg viewBox="0 0 16 16" className="ml-1 size-4">
                <path d="M1 7h14l-2 8H3z" fill="#f2b757" stroke="#98612b" />
                <path d="M2 2l6 5" stroke="#e86a43" strokeWidth="3" />
                <path d="M14 1 9 7" stroke="#4a7fc4" strokeWidth="2" />
                <path d="M5 10q3 3 6 0" fill="none" stroke="#fff" strokeWidth="2" />
            </svg>
            <svg viewBox="0 0 16 16" className="ml-1 size-4">
                <path d="M0 1h14v10H0z" fill="#d7e6f5" />
                <path d="M2 3h3v3H2zM2 8.500h4" fill="#405e86" stroke="#405e86" />
                <circle cx="10" cy="7" r="4" fill="#a5d3f3" stroke="#3469a4" />
                <path d="m7 10-4 5" stroke="#b9d4ee" strokeWidth="2" />
            </svg>
            <svg viewBox="0 0 16 16" className="ml-1 size-4">
                <path d="M1.500.5h10v13h-10zM3 3.500h7M3 6.500h7M3 9.500h7" fill="#f1f6fc" stroke="#6e88aa" />
                <path d="M9 7v8l2-2 1 3 1.500-.5L12.500 12H15z" fill="#fff" stroke="#555" strokeWidth="0.700" />
            </svg>
            <HelpIcon className="ml-[7px] size-4" />
            <svg viewBox="0 0 10 18" className="ml-[9px] h-[18px] w-2.5">
                <path d="M3.500 1.500h5v3h-5zM1.500 3.500h5v3h-5z" fill="#205a92" stroke="#fff" />
                <path d="M2 14h5l-2.500 3z" fill="#fff" />
            </svg>
        </div>
    );
}

function Tray() {
    const cell = "flex w-6 items-center justify-center";
    return (
        <div className="flex h-4 items-center">
            <button aria-label="显示隐藏的图标" className={cell}>
                <Caret className="w-2 rotate-180 text-white" />
            </button>
            <span className={cell}><BrowserIcon green className="size-[15px]" /></span>
            <span className={cell}>
                <svg viewBox="0 0 14 14" className="size-[14px]">
                    <path d="M6 0h2v1.500q3 1 3 4.500 0 3 3 5H0q3-2 3-5 0-3.500 3-4.500zM5 12h4q-2 3-4 0z" fill="#fff" />
                </svg>
            </span>
            <span className={cell}>
                <svg viewBox="0 0 16 16" className="size-4">
                    <path d="M8 .5q3 2 7 2 0 10-7 13-7-3-7-13 4 0 7-2z" fill="#f2f8ec" />
                    <path d="M8 2.500q2 1 5 1.500 0 7-5 10-5-3-5-10 3-.5 5-1.500z" fill="#45a527" />
                    <path d="M9 3 5 9h3l-1 4 4-6H8z" fill="#fff" />
                </svg>
            </span>
            <span className={cell}>
                <svg viewBox="0 0 16 16" className="size-4">
                    <circle cx="8" cy="8" r="7.500" fill="#7dc31f" />
                    <path d="M1 5q7-7 14 3-7 3-9 7-6-3-5-10z" fill="#f9e51d" />
                    <path d="M8 4v8M4 8h8" stroke="#1c6a1c" strokeWidth="2.500" />
                </svg>
            </span>
            <span className={cell}>
                <svg viewBox="0 0 16 16" className="size-4">
                    <path d="M1.500 1v14" stroke="#fff" strokeWidth="1.500" />
                    <path d="M3 2q3-1 5 1t5 0v7q-3 2-5 0t-5 0z" fill="#fff" />
                    <circle cx="11" cy="11" r="4.500" fill="#d92b25" />
                    <path d="m9 9 4 4M13 9l-4 4" stroke="#fff" strokeWidth="1.500" />
                </svg>
            </span>
            <span className={cell}>
                <svg viewBox="0 0 10 16" className="h-4 w-2.5">
                    <path d="M3 .5h4v2h2v12.500H1V2.500h2z" fill="#111" stroke="#fff" strokeWidth="1.300" />
                    <path d="M3 12h4v1.500H3z" fill="#fff" />
                </svg>
            </span>
            <span className={cell}>
                <svg viewBox="0 0 15 12" className="h-3 w-[15px]">
                    <path d="M0 10h2v2H0zM3 8h2v4H3zM6 6h2v6H6zM9 3h2v9H9zM12 0h2v12h-2z" fill="#fff" />
                </svg>
            </span>
            <span className={cell}>
                <svg viewBox="0 0 8 14" className="h-[14px] w-2">
                    <path d="M0 4h3l4-4v14l-4-4H0z" fill="#fff" />
                </svg>
            </span>
        </div>
    );
}

function Taskbar() {
    return (
        <div className="flex h-[39px] items-stretch bg-[linear-gradient(90deg,#1d6398,#17578b_8%,#2f93ca_10%,#3ba5d8_33%,#2788c7_40%,#237ec0_56%,#1c5b93_60%,#1a5389_75%,#154478_85%,#113a69)] text-white">
            <button aria-label="开始" className="ml-[7px]"><StartOrb /></button>
            <button aria-label="浏览器" className="mr-[19px] ml-[21px]"><BrowserIcon className="size-8" /></button>
            <div className="flex gap-[3px]">
                <TaskButton label="浏览器窗口"><BrowserIcon green className="size-[30px]" /></TaskButton>
                <TaskButton label="文件夹"><ExplorerIcon /></TaskButton>
                <TaskButton label="演示文稿"><SlidesIcon /></TaskButton>
                <TaskButton label="船舶"><ShipIcon /></TaskButton>
                <TaskButton label="微信"><WeChatIcon /></TaskButton>
                <div className="flex rounded-[3px] border-r border-[#163e60] bg-[#8ec3e4] pr-[3px]">
                    <TaskButton label="文档" active><WordIcon /></TaskButton>
                </div>
            </div>
            <div className="ml-auto flex">
                <div className="mt-2.5 mr-2.5"><LanguageBar /></div>
                <div className="flex w-[104px] items-center gap-2.5 rounded-tl-[14px] border-t border-r border-l border-[#5481ab] border-r-[#0f3560] bg-[linear-gradient(45deg,#17508a_60%,#6d93b8_66%,#17508a_72%)] pl-[13px]">
                    <div className="flex items-center">
                        <span className="flex h-[19px] w-[48px] items-center justify-center border border-white bg-linear-to-r from-[#1e9246] from-22% to-black to-22% text-[12px]">(0:15)</span>
                        <span className="h-2 w-0.5 bg-white" />
                    </div>
                    <span className="flex size-[15px] items-center justify-center rounded-full bg-white font-['Liberation_Serif'] text-[14px] font-bold text-[#1515b0]">i</span>
                </div>
                <div className="mt-3"><Tray /></div>
                <time className="w-[94px] pt-0.5 text-center text-[12px] leading-[18px]">
                    19:55
                    <br />
                    2018-10-22
                </time>
                <button aria-label="显示桌面" className="w-[23px] border border-[#6f8fae] bg-linear-to-br from-[#5c7d9f] to-[#12386a] to-60%" />
            </div>
        </div>
    );
}

export default function App() {
    return (
        <div className="flex min-h-screen flex-col overflow-hidden bg-[#a3c1e9] font-['Noto_Sans','Noto_Sans_CJK_SC',sans-serif] text-[12px]">
            <TitleBar />
            <Ribbon />
            <HorizontalRuler />
            <main className="flex flex-1">
                <VerticalRuler />
                <div className="flex flex-1 justify-center gap-1.5 pt-2">
                    <CoverPage />
                    <ContentsPage />
                </div>
                <ScrollBar />
            </main>
            <StatusBar />
            <Taskbar />
        </div>
    );
}
